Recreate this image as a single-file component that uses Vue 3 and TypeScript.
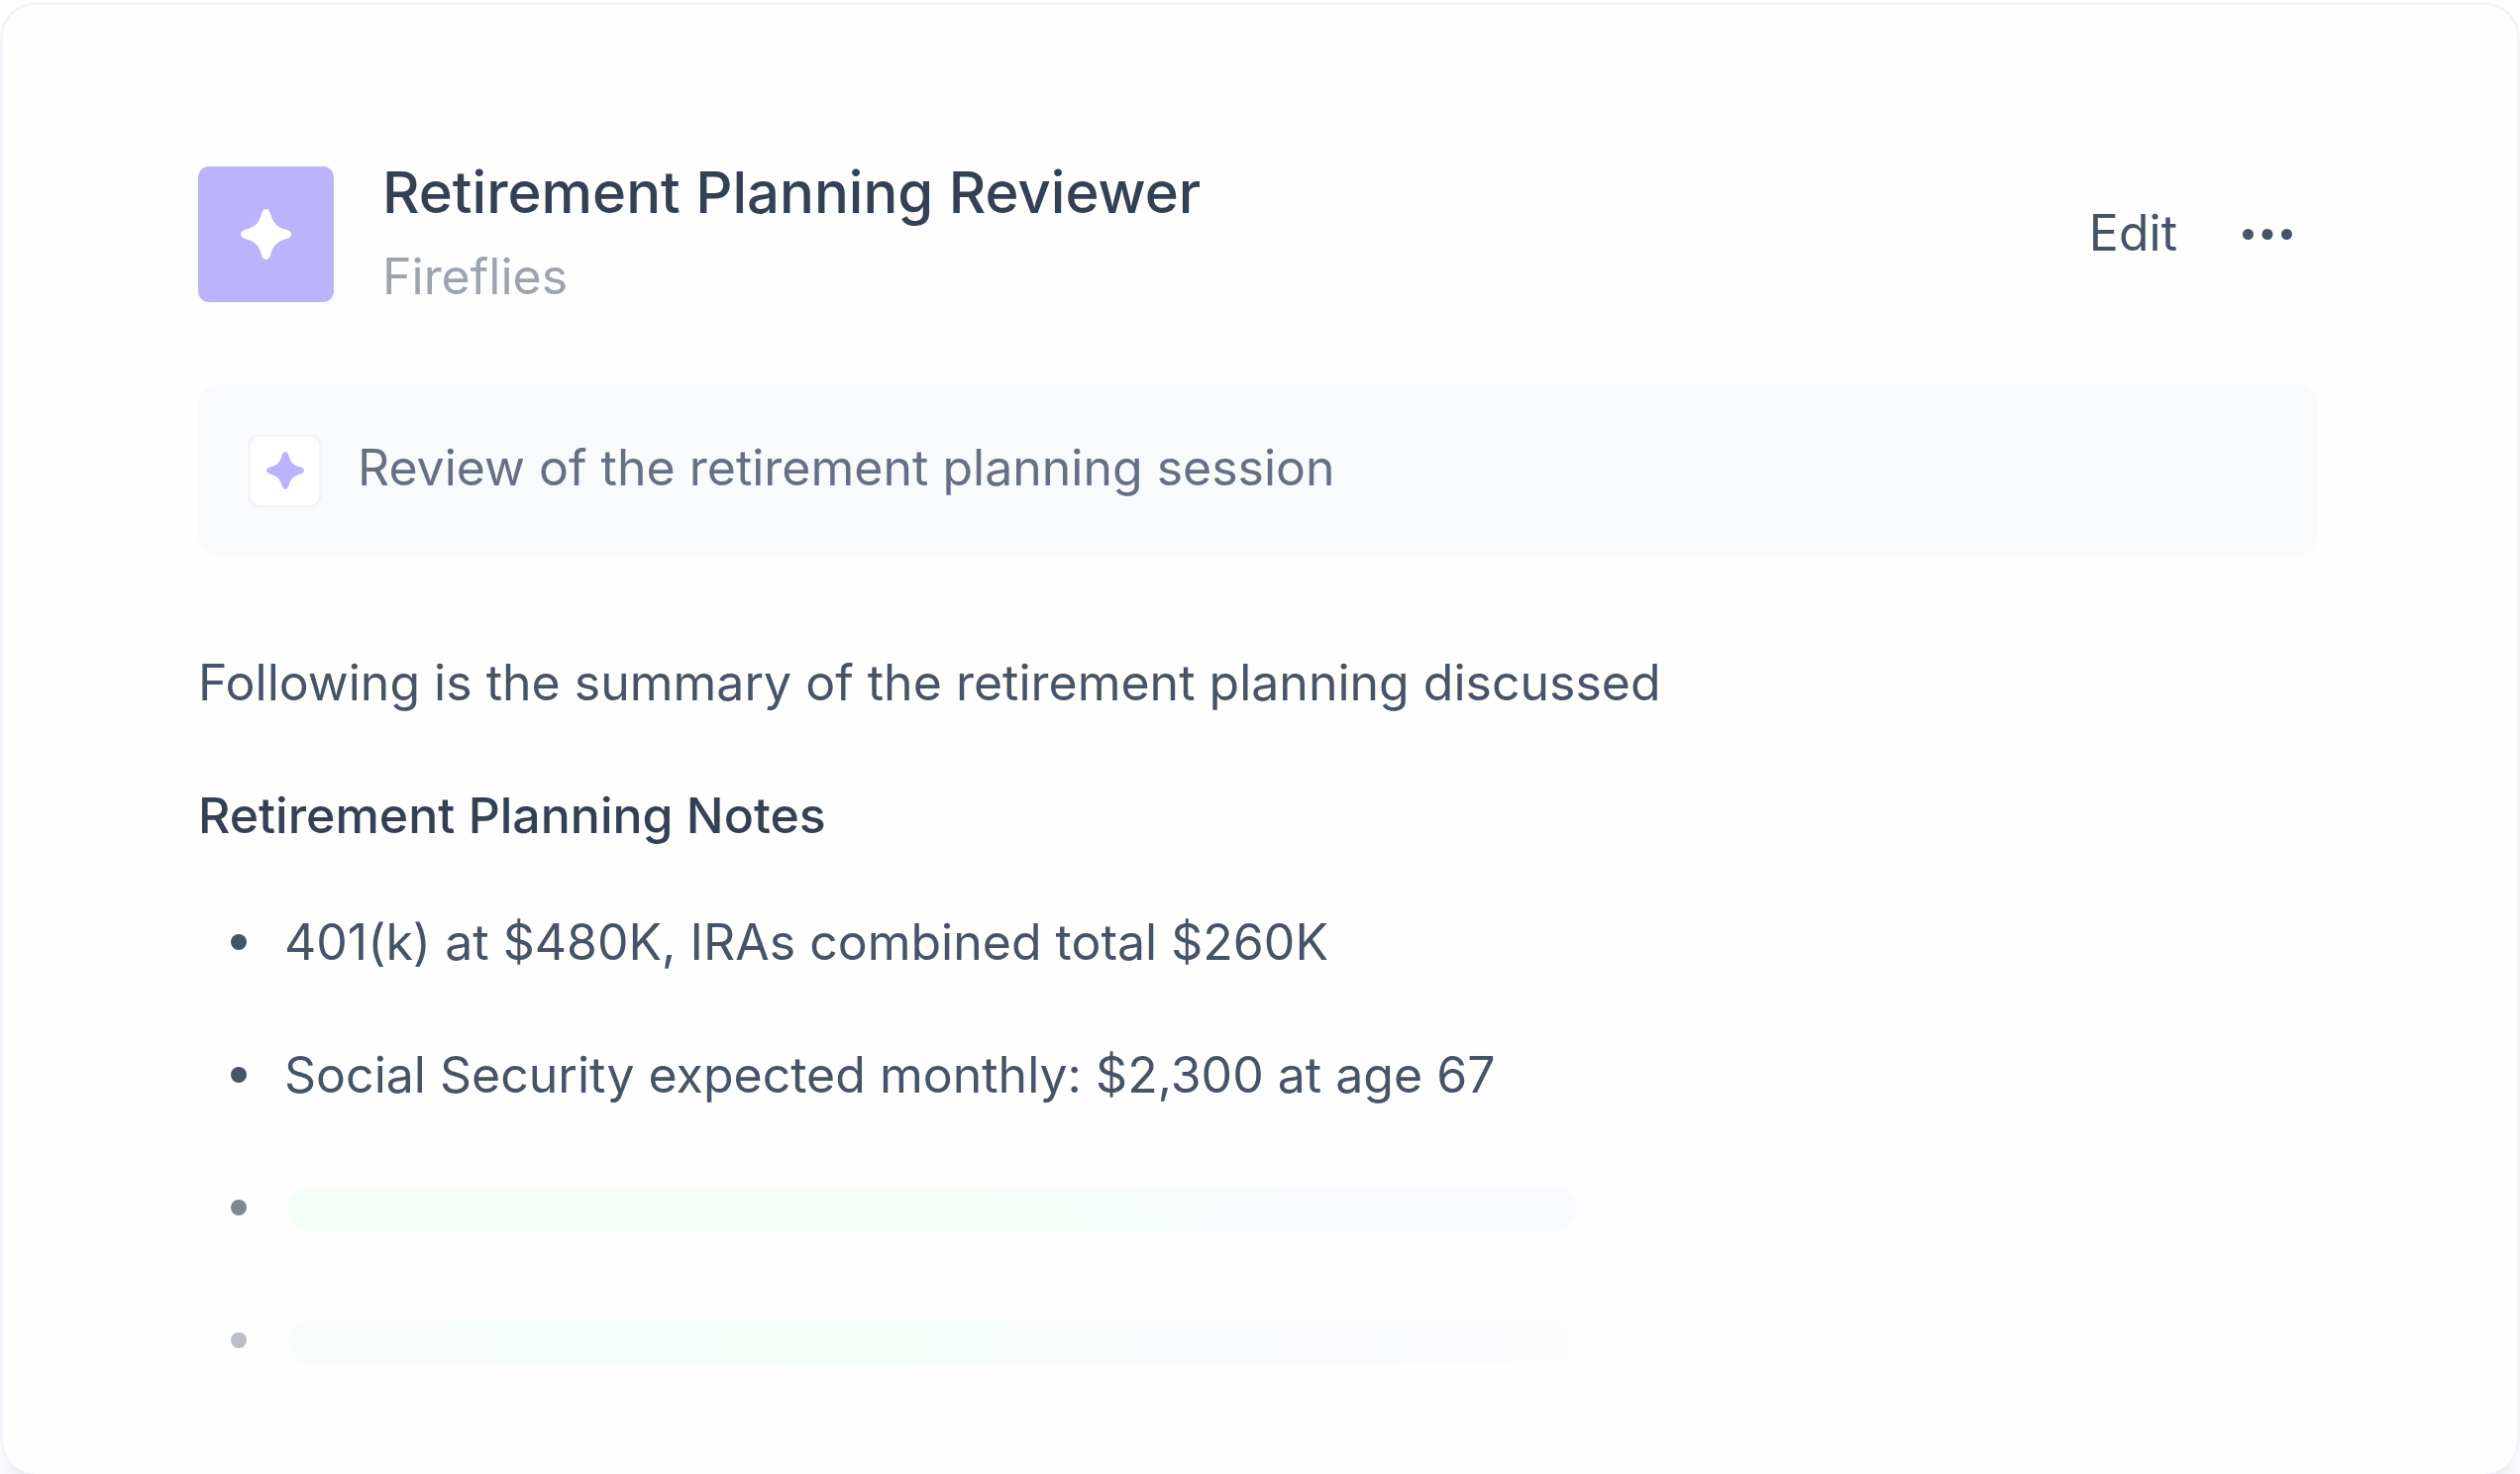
<script setup lang="ts">
interface Note {
  text?: string
  tone: string
}

const notes: Note[] = [
  { text: '401(k) at $480K, IRAs combined total $260K', tone: 'solid' },
  { text: 'Social Security expected monthly: $2,300 at age 67', tone: 'solid' },
  { tone: 'faded' },
  { tone: 'faint' },
]
</script>

<template>
  <main class="card">
    <header class="header">
      <div class="avatar">
        <svg class="avatar-star" viewBox="0 0 52 52" aria-hidden="true">
          <path d="M26 0C29 0 30 3 31 6C33 14 38 19 46 21C49 22 52 23 52 26C52 29 49 30 46 31C38 33 33 38 31 46C30 49 29 52 26 52C23 52 22 49 21 46C19 38 14 33 6 31C3 30 0 29 0 26C0 23 3 22 6 21C14 19 19 14 21 6C22 3 23 0 26 0Z" />
        </svg>
      </div>
      <div class="titles">
        <h1 class="title">Retirement Planning Reviewer</h1>
        <p class="subtitle">Fireflies</p>
      </div>
      <div class="actions">
        <button class="edit" type="button">Edit</button>
        <button class="more" type="button" aria-label="More options">
          <svg class="dots" viewBox="0 0 50 11" aria-hidden="true">
            <circle cx="5.5" cy="5.5" r="5.5" />
            <circle cx="25" cy="5.5" r="5.5" />
            <circle cx="44.5" cy="5.5" r="5.5" />
          </svg>
        </button>
      </div>
    </header>

    <section class="banner">
      <span class="tile">
        <svg class="tile-star" viewBox="0 0 52 52" aria-hidden="true">
          <path d="M26 0C29 0 30 3 31 6C33 14 38 19 46 21C49 22 52 23 52 26C52 29 49 30 46 31C38 33 33 38 31 46C30 49 29 52 26 52C23 52 22 49 21 46C19 38 14 33 6 31C3 30 0 29 0 26C0 23 3 22 6 21C14 19 19 14 21 6C22 3 23 0 26 0Z" />
        </svg>
      </span>
      <p class="prompt">Review of the retirement planning session</p>
    </section>

    <p class="summary">Following is the summary of the retirement planning discussed</p>
    <h2 class="heading">Retirement Planning Notes</h2>
    <ul class="notes">
      <li v-for="(note, i) in notes" :key="i" class="note" :class="note.tone">
        <span v-if="note.text">{{ note.text }}</span>
        <span v-else class="bar"></span>
      </li>
    </ul>
  </main>
</template>

<style>
body {
  background: #ffffff;
}
</style>

<style scoped>
.card {
  box-sizing: border-box;
  min-height: calc(100vh - 2px);
  margin-top: 2px;
  padding: 159px 201px 80px 197px;
  border: 3px solid #f2f4f9;
  border-bottom-width: 0;
  border-radius: 36px;
  background: #fefefe;
  box-shadow: 0 30px 24px -8px #e9ebf2;
  color: #475467;
  font-family: Inter, "Liberation Sans", sans-serif;
  font-size: 50px;
  line-height: 60px;
}

h1,
h2,
p,
ul {
  margin: 0;
  padding: 0;
}

.header {
  display: flex;
  align-items: center;
}

.avatar {
  display: flex;
  flex: none;
  align-items: center;
  justify-content: center;
  width: 137px;
  height: 137px;
  border-radius: 11px;
  background: #bbb4fd;
}

.avatar-star {
  width: 51px;
  height: 51px;
  fill: #ffffff;
}

.titles {
  display: flex;
  flex: 1;
  flex-direction: column;
  gap: 25px;
  margin-left: 49px;
}

.title {
  color: #344054;
  font-size: 58px;
  font-weight: 500;
}

.subtitle {
  color: #9da4b0;
}

button {
  padding: 0;
  border: 0;
  background: none;
  color: inherit;
  font: inherit;
}

.actions {
  display: flex;
  align-items: center;
  gap: 66px;
  margin-right: 26px;
}

.edit {
  padding-bottom: 4px;
}

.more {
  display: flex;
  align-items: center;
  height: 60px;
}

.dots {
  width: 50px;
  height: 11px;
  fill: #475467;
}

.banner {
  box-sizing: border-box;
  display: flex;
  align-items: center;
  gap: 36px;
  height: 174px;
  margin-top: 78px;
  padding: 2px 50px 0;
  border-radius: 22px;
  background: #f9fafc;
}

.tile {
  box-sizing: border-box;
  display: flex;
  flex: none;
  align-items: center;
  justify-content: center;
  width: 75px;
  height: 75px;
  border: 3px solid #f3f4f8;
  border-radius: 12px;
  background: #ffffff;
}

.tile-star {
  width: 38px;
  height: 38px;
  fill: #bbb4fd;
}

.prompt {
  padding-bottom: 6px;
  color: #667085;
}

.summary {
  margin-top: 98px;
}

.heading {
  margin-top: 74px;
  color: #344054;
  font-size: 50px;
  font-weight: 500;
}

.notes {
  display: flex;
  flex-direction: column;
  gap: 74px;
  margin-top: 68px;
  list-style: none;
}

.note {
  display: flex;
  align-items: center;
  gap: 38px;
  padding-left: 33px;
}

.note::before {
  flex: none;
  width: 16px;
  height: 16px;
  border-radius: 50%;
  background: #475467;
  content: "";
}

.faded,
.faint {
  height: 60px;
}

.faded::before {
  background: #7f8896;
}

.faint::before {
  background: #babfc8;
}

.bar {
  width: 1301px;
  height: 44px;
  margin-top: 4px;
  margin-left: 4px;
  border-radius: 22px;
  background: linear-gradient(90deg, #f4fff8 52%, #f9fafd 80%);
}

.faint .bar {
  background: linear-gradient(90deg, #f8fcfb, #f6fef9 45%, #fafbfd 75%, #fdfdfe);
}
</style>
